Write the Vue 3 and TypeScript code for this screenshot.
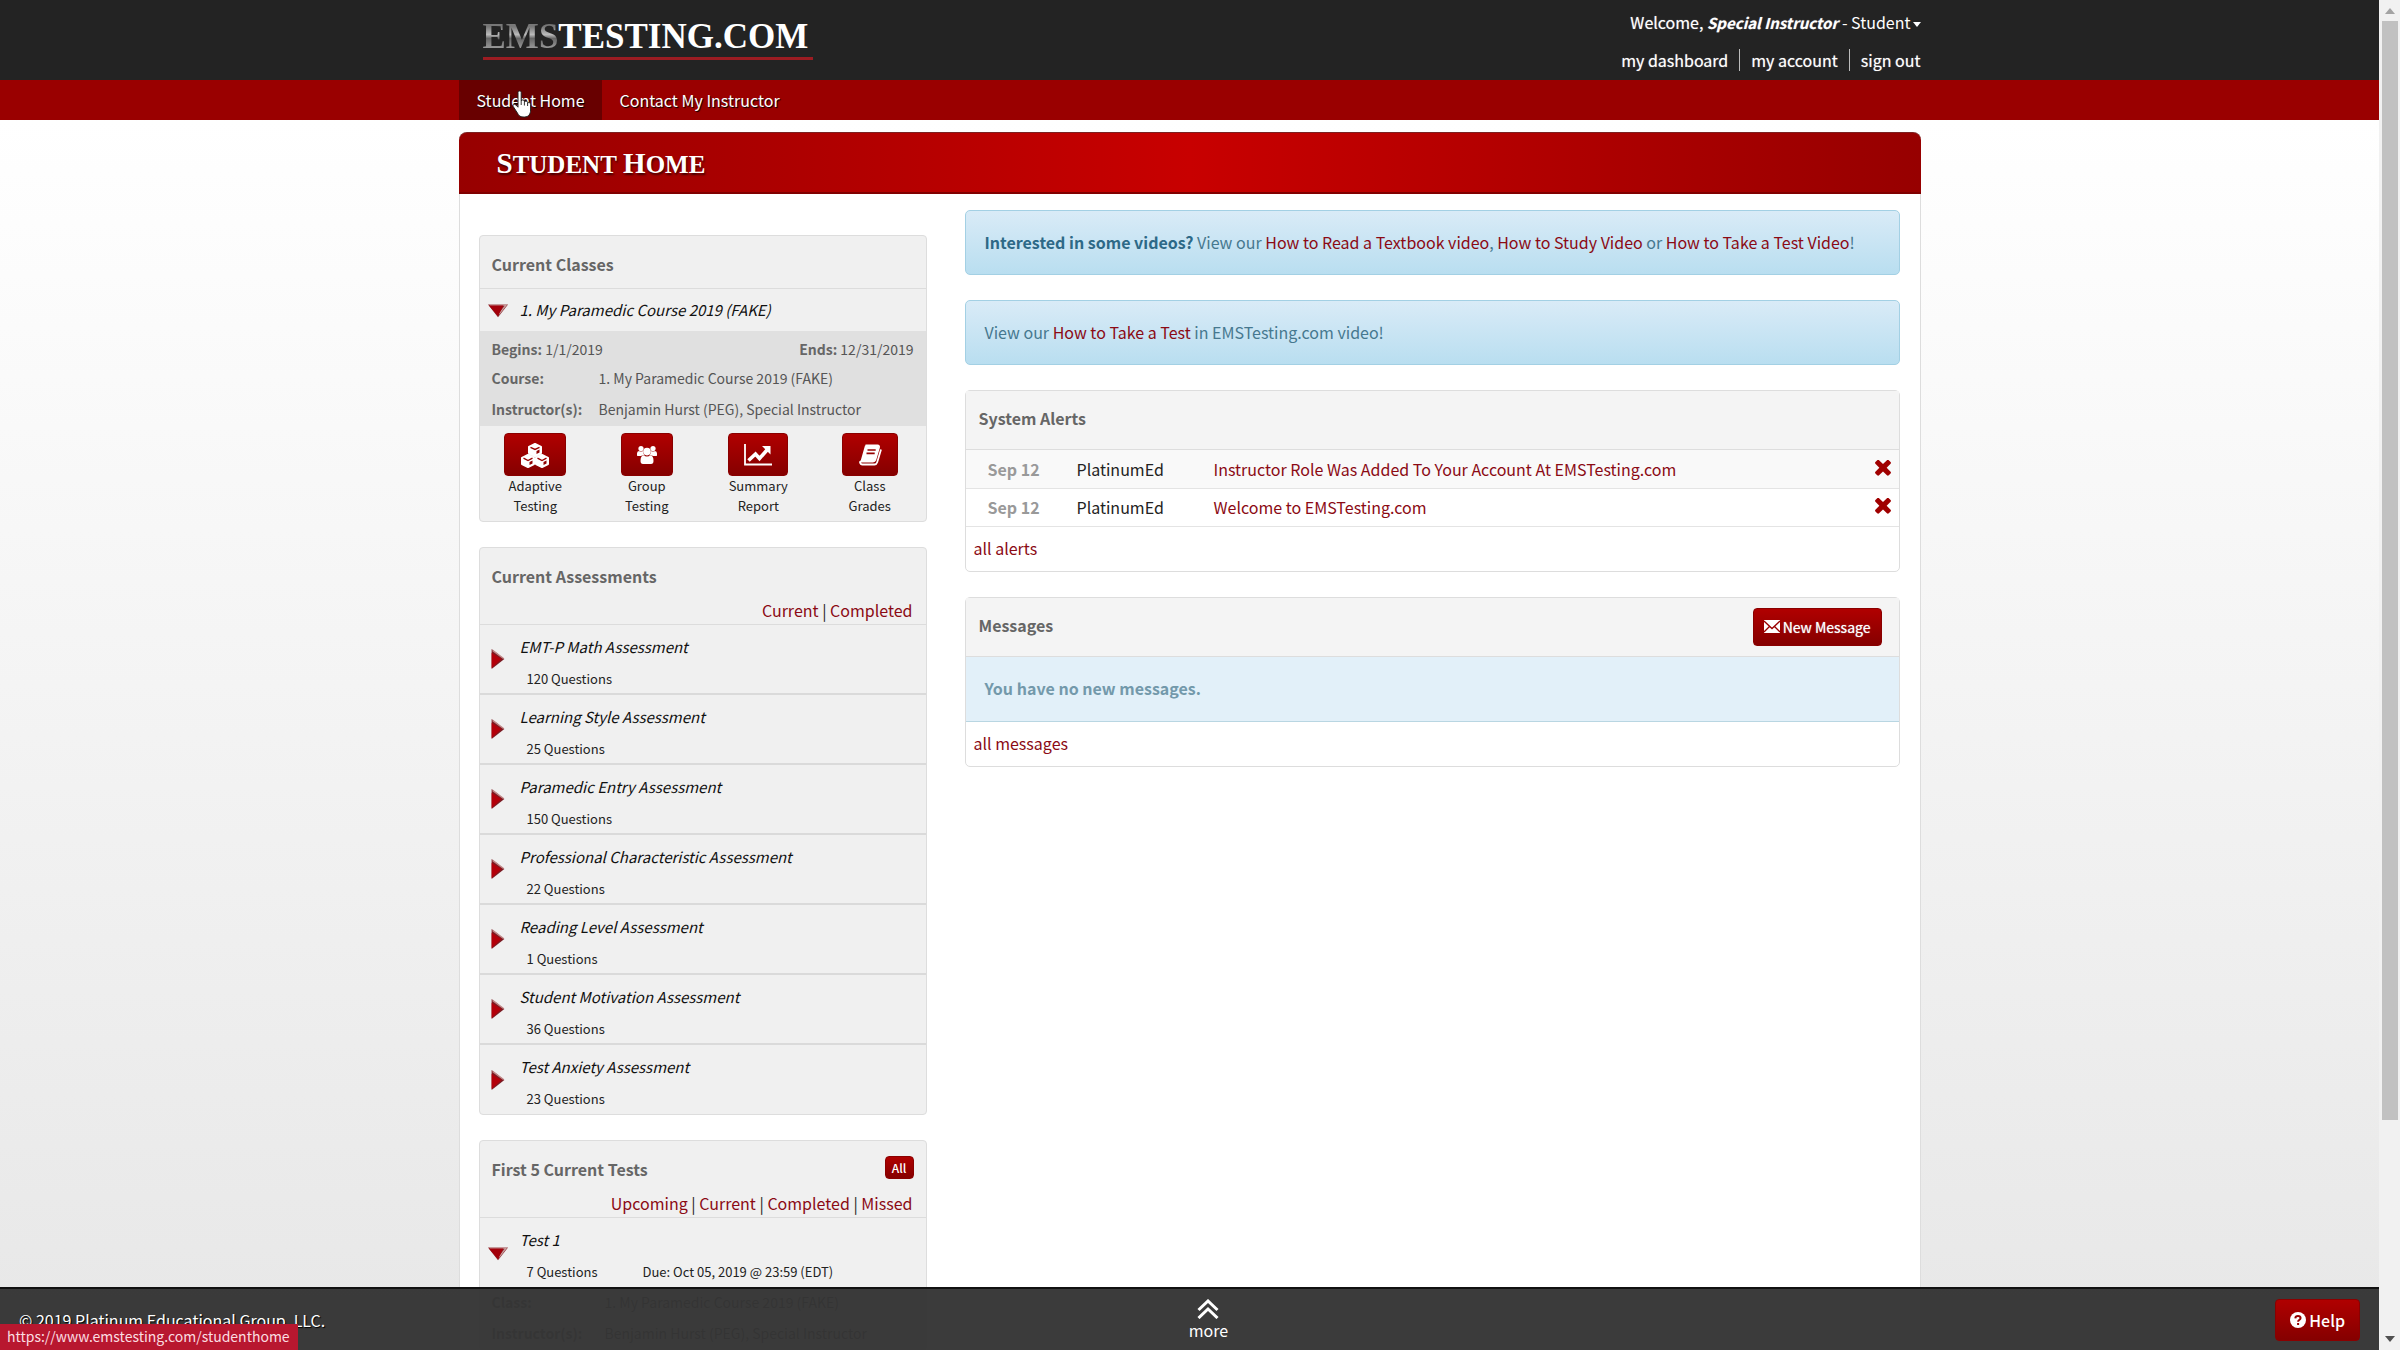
<script setup lang="ts">
interface Assessment {
  name: string
  questions: number
}
interface Alert {
  date: string
  from: string
  subject: string
}

const assessments: Assessment[] = [
  { name: 'EMT-P Math Assessment', questions: 120 },
  { name: 'Learning Style Assessment', questions: 25 },
  { name: 'Paramedic Entry Assessment', questions: 150 },
  { name: 'Professional Characteristic Assessment', questions: 22 },
  { name: 'Reading Level Assessment', questions: 1 },
  { name: 'Student Motivation Assessment', questions: 36 },
  { name: 'Test Anxiety Assessment', questions: 23 },
]

const alerts: Alert[] = [
  { date: 'Sep 12', from: 'PlatinumEd', subject: 'Instructor Role Was Added To Your Account At EMSTesting.com' },
  { date: 'Sep 12', from: 'PlatinumEd', subject: 'Welcome to EMSTesting.com' },
]

const testFilters: string[] = ['Upcoming', 'Current', 'Completed', 'Missed']
const assessmentFilters: string[] = ['Current', 'Completed']
</script>

<template>
  <div class="shell">
    <div class="window">
      <div class="page">
        <header class="top">
          <div class="container top-row">
            <a class="logo" href="#"><span class="logo-ems">EMS</span>TESTING.COM</a>
            <div class="user">
              <p class="welcome">
                Welcome, <strong><em>Special Instructor</em></strong>
                <button class="role" type="button">- Student<span class="caret"></span></button>
              </p>
              <ul class="user-links">
                <li><a href="#">my dashboard</a></li>
                <li><a href="#">my account</a></li>
                <li><a href="#">sign out</a></li>
              </ul>
            </div>
          </div>
        </header>

        <nav class="nav">
          <div class="container nav-row">
            <a class="active" href="#">Student Home
              <svg class="cursor" viewBox="0 0 22 28" width="22" height="28" aria-hidden="true">
                <path d="M6 2.500c0-2 3.200-2 3.200 0v8.500c.4-1.600 3-1.500 3.200.3v.7c.5-1.500 3-1.200 3.200.5v.8c.6-1.300 3-1 3 .9v5.800c0 4-2 7-6 7H11c-3 0-4.300-1.600-5.600-4L1.200 16.500c-1-2 1.200-3 2.600-1.600L6 17.200z" fill="#fff" stroke="#222" stroke-width="1" />
                <path d="M9.200 11v4M12.400 12v3.500M15.600 13v3" stroke="#333" stroke-width="1" fill="none" />
              </svg>
            </a>
            <a href="#">Contact My Instructor</a>
          </div>
        </nav>

        <main class="container board">
          <h1 class="board-title"><span>Student</span> <span>Home</span></h1>

          <div class="columns">
            <aside class="side">
              <section class="panel">
                <h2 class="panel-title">Current Classes</h2>
                <div class="class-name">
                  <svg class="arrow" viewBox="0 0 22 22" aria-hidden="true"><use href="#arrow-down" /></svg>
                  <em>1. My Paramedic Course 2019 (FAKE)</em>
                </div>
                <div class="details">
                  <p class="dates"><span><b>Begins:</b> 1/1/2019</span><span><b>Ends:</b> 12/31/2019</span></p>
                  <dl>
                    <dt>Course:</dt><dd>1. My Paramedic Course 2019 (FAKE)</dd>
                    <dt>Instructor(s):</dt><dd>Benjamin Hurst (PEG), Special Instructor</dd>
                  </dl>
                </div>
                <div class="actions">
                  <div class="action">
                    <button class="btn" type="button" aria-label="Adaptive Testing">
                      <svg viewBox="0 0 30 26" width="30" height="26">
                        <g fill="#fff" stroke="#fff" stroke-width="2" stroke-linejoin="round">
                          <path d="M15 2l6 3v6l-6 3-6-3V5zM8 13l6 3v6l-6 3-6-3v-6zM22 13l6 3v6l-6 3-6-3v-6z" />
                        </g>
                        <path d="M15 8v-.1M10.500 5.300L15 7.500l4.500-2.200M3.500 16.200L8 18.500l4.500-2.300M17.500 16.200l4.500 2.300 4.500-2.300" stroke="#990000" stroke-width="1.400" fill="none" />
                        <path d="M16.500 9l3-1.500v3l-3 1.600zM9.500 20l3-1.500v3l-3 1.500zM23.500 20l3-1.500v3l-3 1.500z" fill="#900000" />
                      </svg>
                    </button>
                    <span>Adaptive<br>Testing</span>
                  </div>
                  <div class="action">
                    <button class="btn" type="button" aria-label="Group Testing">
                      <svg viewBox="0 0 20 18" width="20" height="18" fill="#fff">
                        <circle cx="4" cy="2.600" r="2.600" /><circle cx="16" cy="2.600" r="2.600" />
                        <path d="M0 9.500V7.500Q0 5 2 5q2 1.200 4 0 0 3 2 4.500H5L4 10H2Q0 10 0 9.500zM20 9.500V7.500Q20 5 18 5q-2 1.200-4 0 0 3-2 4.500h3l1 .5h2q2 0 2-.5z" />
                        <circle cx="10" cy="5.600" r="3.800" />
                        <path d="M3.500 15q0-5.500 3-5.500 3.500 2 7 0 3 0 3 5.500 0 3-2.500 3H6q-2.500 0-2.500-3z" />
                      </svg>
                    </button>
                    <span>Group<br>Testing</span>
                  </div>
                  <div class="action">
                    <button class="btn" type="button" aria-label="Summary Report">
                      <svg viewBox="0 0 28 22" width="28" height="22">
                        <path d="M1 0v20.500h27" fill="none" stroke="#fff" stroke-width="1.800" />
                        <path d="M4.500 16.500l7-6.500 4 4.500 7.500-8.500" fill="none" stroke="#fff" stroke-width="3.600" />
                        <path d="M18 2h8.500v8.500z" fill="#fff" />
                      </svg>
                    </button>
                    <span>Summary<br>Report</span>
                  </div>
                  <div class="action">
                    <button class="btn" type="button" aria-label="Class Grades">
                      <svg viewBox="0 0 24 22" width="24" height="22">
                        <path d="M7.500 1.500h12q2 0 1.500 2l-3.700 12.500q-.5 1.500-2.300 1.500H4q-2.200 0-2 .8.500 2.200 2.500 2.200h12q2 0 2.700-2.200L23 5.500" fill="none" stroke="#fff" stroke-width="1.800" />
                        <path d="M7 1.500h12.500q2 0 1.300 2L17 16q-.4 1.300-2 1.300H2.500z" fill="#fff" />
                        <path d="M9.500 6h8.200M8.500 9.400h8.200" stroke="#960000" stroke-width="1.600" />
                      </svg>
                    </button>
                    <span>Class<br>Grades</span>
                  </div>
                </div>
              </section>

              <section class="panel">
                <h2 class="panel-title with-filters">Current Assessments</h2>
                <p class="filters">
                  <template v-for="(f, i) in assessmentFilters" :key="f"><template v-if="i"> | </template><a href="#">{{ f }}</a></template>
                </p>
                <ul class="items">
                  <li v-for="a in assessments" :key="a.name" class="item">
                    <svg class="arrow" viewBox="0 0 22 22" aria-hidden="true"><use href="#arrow-right" /></svg>
                    <div class="item-text">
                      <em>{{ a.name }}</em>
                      <p class="meta"><span>{{ a.questions }} Questions</span></p>
                    </div>
                  </li>
                </ul>
              </section>

              <section class="panel">
                <div class="title-row">
                  <h2 class="panel-title with-filters">First 5 Current Tests</h2>
                  <button class="btn btn-all" type="button">All</button>
                </div>
                <p class="filters">
                  <template v-for="(f, i) in testFilters" :key="f"><template v-if="i"> | </template><a href="#">{{ f }}</a></template>
                </p>
                <ul class="items">
                  <li class="item">
                    <svg class="arrow" viewBox="0 0 22 22" aria-hidden="true"><use href="#arrow-down" /></svg>
                    <div class="item-text">
                      <em>Test 1</em>
                      <p class="meta"><span>7 Questions</span><span>Due: Oct 05, 2019 @ 23:59 (EDT)</span></p>
                    </div>
                  </li>
                </ul>
                <div class="details tight">
                  <dl class="wide">
                    <dt>Class:</dt><dd>1. My Paramedic Course 2019 (FAKE)</dd>
                    <dt>Instructor(s):</dt><dd>Benjamin Hurst (PEG), Special Instructor</dd>
                  </dl>
                </div>
              </section>
            </aside>

            <div class="feed">
              <p class="notice">
                <strong>Interested in some videos?</strong> View our <a href="#">How to Read a Textbook video</a>, <a href="#">How to Study Video</a> or <a href="#">How to Take a Test Video</a>!
              </p>
              <p class="notice">View our <a href="#">How to Take a Test</a> in EMSTesting.com video!</p>

              <section class="box">
                <div class="box-head"><h2>System Alerts</h2></div>
                <table class="alerts">
                  <tbody>
                    <tr v-for="a in alerts" :key="a.subject">
                      <th scope="row">{{ a.date }}</th>
                      <td class="from">{{ a.from }}</td>
                      <td><a href="#">{{ a.subject }}</a></td>
                      <td class="remove">
                        <button type="button" aria-label="Remove alert">
                          <svg viewBox="300 384 1192 1192" width="16" height="16">
                            <path fill="#a00000" d="M1490 1322q0 40-28 68l-136 136q-28 28-68 28t-68-28l-294-294-294 294q-28 28-68 28t-68-28l-136-136q-28-28-28-68t28-68l294-294-294-294q-28-28-28-68t28-68l136-136q28-28 68-28t68 28l294 294 294-294q28-28 68-28t68 28l136 136q28 28 28 68t-28 68l-294 294 294 294q28 28 28 68z" />
                          </svg>
                        </button>
                      </td>
                    </tr>
                  </tbody>
                </table>
                <p class="all"><a href="#">all alerts</a></p>
              </section>

              <section class="box">
                <div class="box-head">
                  <h2>Messages</h2>
                  <button class="btn btn-new" type="button">
                    <svg viewBox="0 0 16 13" width="16" height="13">
                      <rect width="16" height="13" fill="#fff" />
                      <path d="M0 1l8 7.500L16 1M0 12l5.500-5.500M16 12l-5.500-5.500" stroke="#990000" stroke-width="1.300" fill="none" />
                    </svg>
                    New Message
                  </button>
                </div>
                <p class="empty">You have no new messages.</p>
                <p class="all"><a href="#">all messages</a></p>
              </section>
            </div>
          </div>
        </main>
      </div>

      <footer class="footer">
        <p>© 2019 Platinum Educational Group, LLC.</p>
        <button class="more" type="button">
          <svg viewBox="0 0 22 20" width="22" height="20" fill="none" stroke="#fff" stroke-width="3">
            <path d="M1.500 11L11 2l9.500 9M1.500 19L11 10l9.500 9" />
          </svg>
          more
        </button>
        <button class="btn btn-help" type="button">
          <svg viewBox="0 0 16 16" width="16" height="16">
            <circle cx="8" cy="8" r="8" fill="#fff" />
            <path d="M5.300 6.300Q5.500 3.900 8 3.900t2.600 2.200q0 1.100-1.300 1.800Q8.100 8.500 8.100 9.800M8.100 11v2" stroke="#960000" stroke-width="2" fill="none" />
          </svg>
          Help
        </button>
      </footer>
      <div class="status">https://www.emstesting.com/studenthome</div>
    </div>

    <div class="scrollbar" aria-hidden="true">
      <svg viewBox="0 0 10 6" width="10" height="6"><path d="M0 6l5-6 5 6z" fill="#a3a3a3" /></svg>
      <div class="track"><div class="thumb"></div></div>
      <svg viewBox="0 0 10 6" width="10" height="6"><path d="M0 0l5 6 5-6z" fill="#505050" /></svg>
    </div>

    <svg width="0" height="0" class="defs" aria-hidden="true">
      <defs>
        <symbol id="arrow-down" viewBox="0 0 22 22">
          <path d="M0 5h22L11 19z" fill="#8c2a30" /><path d="M2 5.500h18l-8 10" stroke="#c9a0a0" stroke-width="1.500" fill="none" />
          <path d="M1 6h16l-6 12z" fill="#a3000a" />
        </symbol>
        <symbol id="arrow-right" viewBox="0 0 22 22">
          <path d="M4 0l14 11L4 22z" fill="#7c1c24" /><path d="M5 1.500l12 9" stroke="#c48a8a" stroke-width="1.500" fill="none" />
          <path d="M4 4l11 7L4 21z" fill="#b3000a" />
        </symbol>
      </defs>
    </svg>
  </div>
</template>

<style>
body {
  margin: 0;
}
</style>

<style scoped>
.shell {
  display: flex;
  height: 100vh;
  overflow: hidden;
  font-family: "Noto Sans CJK SC", "Open Sans", sans-serif;
  font-size: 16px;
  line-height: 22px;
  color: #222;
}
.shell * {
  box-sizing: border-box;
}
.defs {
  position: absolute;
}
p, h1, h2, ul, dl, dd {
  margin: 0;
  padding: 0;
}
ul {
  list-style: none;
}
a {
  color: #8b0a14;
  text-decoration: none;
}
button {
  font: inherit;
  color: inherit;
  border: 0;
  padding: 0;
  background: none;
  cursor: pointer;
}
.window {
  position: relative;
  flex: 1;
  min-width: 0;
}
.page {
  height: 100%;
  overflow-y: auto;
  scrollbar-width: none;
  background: linear-gradient(#fff 120px, #e7e7e7);
}
.container {
  width: 100%;
  max-width: 1462px;
  margin: 0 auto;
}

.top {
  background: #232323;
  color: #fff;
}
.top-row {
  display: flex;
  justify-content: space-between;
  height: 80px;
}
.logo {
  align-self: flex-start;
  margin: 16px 0 0 24px;
  padding-right: 5px;
  border-bottom: 3px solid #9c1c22;
  font: bold 35px/41px "Liberation Serif", serif;
  color: #fff;
}
.logo-ems {
  background: linear-gradient(#777 25%, #bbb 45%, #666 55%, #999 80%);
  background-clip: text;
  color: transparent;
}
.user {
  padding-top: 11px;
  text-align: right;
  text-shadow: 0 0 1px #999;
}
.role {
  margin-left: 4px;
}
.caret {
  display: inline-block;
  margin-left: 2px;
  vertical-align: 2px;
  border: 4px solid transparent;
  border-top: 5px solid #fff;
  border-bottom: 0;
}
.user-links {
  display: flex;
  justify-content: flex-end;
  margin-top: 15px;
}
.user-links li + li {
  margin-left: 11px;
  padding-left: 11px;
  border-left: 1px solid #bbb;
}
.user-links a,
.nav a {
  color: #fff;
}

.nav {
  background: #9a0000;
}
.nav-row {
  display: flex;
}
.nav a {
  position: relative;
  padding: 9px 17px 9px 18px;
  text-shadow: 1px 1px 1px #000;
}
.nav .active {
  background: #680000;
}
.cursor {
  position: absolute;
  left: 53px;
  top: 10px;
}

.board {
  margin-top: 12px;
  background: #fff;
  border: 1px solid #ddd;
  border-top: 0;
  border-radius: 8px 8px 0 0;
}
.board-title {
  margin: 0 -1px;
  padding: 3px 38px 0;
  border-top: 1px solid #7c2020;
  border-bottom: 2px solid #800000;
  border-radius: 8px 8px 0 0;
  background: linear-gradient(90deg, #970000, #c80000 50%, #970000);
  font: bold 25px/54px "Liberation Serif", serif;
  text-transform: uppercase;
  text-shadow: 1px 2px 2px #400;
  color: #fff;
}
.board-title span {
  display: inline-block;
}
.board-title span::first-letter {
  font-size: 29px;
}
.columns {
  display: grid;
  grid-template-columns: 448fr 935fr;
  gap: 38px;
  align-items: start;
  padding: 0 20px 80px 19px;
}

.side {
  display: grid;
  gap: 25px;
  padding-top: 41px;
}
.panel {
  border: 1px solid #ddd;
  border-radius: 4px;
  background: #f0f0f0;
}
.panel-title {
  padding: 17px 12px 13px;
  border-bottom: 1px solid #dcdcdc;
  font-size: 16px;
  color: #666;
}
.panel-title.with-filters {
  padding-bottom: 12px;
  border-bottom: 0;
}
.title-row {
  display: flex;
  justify-content: space-between;
  align-items: flex-start;
  padding-right: 12px;
}
.filters {
  padding: 0 13px 3px;
  border-bottom: 1px solid #dcdcdc;
  text-align: right;
}
.class-name {
  display: flex;
  align-items: center;
  gap: 12px;
  height: 42px;
  padding: 0 8px;
}
.arrow {
  width: 20px;
  height: 20px;
  flex: none;
}
em {
  color: #111;
}
.class-name em,
.item em {
  font-size: 15px;
}
.welcome em {
  font-size: 15px;
  color: #fff;
}
.details {
  padding: 4px 12px 1px;
  background: #e0e0e0;
  font-size: 14px;
  color: #555;
}
.details.tight {
  padding-top: 0;
}
.details b,
dt {
  font-weight: bold;
  color: #666;
}
.dates {
  display: flex;
  justify-content: space-between;
  line-height: 28px;
}
dl {
  display: grid;
  grid-template-columns: 107px 1fr;
  line-height: 31px;
}
dl.wide {
  grid-template-columns: 113px 1fr;
}
.actions {
  display: grid;
  grid-template-columns: repeat(4, 1fr);
  padding: 7px 0 5px;
}
.action {
  display: flex;
  flex-direction: column;
  align-items: center;
  text-align: center;
  font-size: 13px;
  line-height: 20px;
}
.btn {
  display: inline-flex;
  align-items: center;
  justify-content: center;
  border: 1px solid #8a0000;
  border-radius: 4px;
  background: linear-gradient(#b00000, #850000);
  color: #fff;
}
.action .btn {
  height: 43px;
  padding: 0 15px;
}
.btn-all {
  margin-top: 15px;
  width: 29px;
  height: 23px;
  font-size: 12px;
  font-weight: 500;
}
.item {
  display: flex;
  align-items: center;
  gap: 12px;
  height: 70px;
  padding: 0 8px;
  border-bottom: 2px solid #dadada;
}
.item:last-child {
  height: 69px;
  border-bottom: 0;
}
.item-text {
  padding-top: 6px;
}
.item em {
  display: block;
}
.meta {
  display: flex;
  padding: 11px 0 0 7px;
  font-size: 13px;
  line-height: 20px;
}
.meta span:first-child {
  flex: 0 0 116px;
}

.feed {
  padding-top: 16px;
}
.notice {
  margin-bottom: 25px;
  padding: 20px 19px 21px;
  border: 1px solid #a3d0e4;
  border-radius: 5px;
  background: linear-gradient(#d9ebf7, #b9def0);
  color: #46788f;
}
.notice strong {
  color: #2d6987;
}
.box {
  margin-bottom: 25px;
  border: 1px solid #ddd;
  border-radius: 5px;
  background: #fff;
}
.box-head {
  display: flex;
  justify-content: space-between;
  align-items: center;
  height: 59px;
  padding: 0 17px 0 13px;
  border-bottom: 1px solid #ddd;
  background: #f4f4f4;
}
h2 {
  font-size: 16px;
  color: #666;
}
.box-head h2 {
  padding-bottom: 4px;
}
.alerts {
  width: 100%;
  border-collapse: collapse;
}
.alerts tr {
  height: 38px;
  border-bottom: 1px solid #e4e4e4;
}
.alerts tr:first-child {
  background: #f9f9f9;
}
.alerts th,
.alerts td {
  padding: 0;
  text-align: left;
}
.alerts th {
  width: 111px;
  padding-left: 22px;
  color: #999;
}
.alerts .from {
  width: 137px;
}
.alerts .remove {
  width: 24px;
}
.remove button {
  display: block;
}
.all {
  padding: 10px 8px 12px;
}
.empty {
  padding: 20px 19px 22px;
  border-bottom: 1px solid #b9d6e2;
  background: #e2f0f9;
  font-weight: bold;
  color: #7399ab;
}
.btn-new {
  height: 38px;
  padding: 0 10px;
  gap: 3px;
  font-size: 14px;
  text-shadow: 0 0 1px #ccc;
}

.footer {
  position: absolute;
  left: 0;
  right: 0;
  bottom: 0;
  display: grid;
  grid-template-columns: 1fr auto 1fr;
  align-items: center;
  height: 63px;
  padding: 0 19px;
  border-top: 2px solid #111;
  background: rgba(51, 51, 51, 0.96);
  color: #fff;
  text-shadow: 1px 1px 1px #000;
}
.more {
  display: flex;
  flex-direction: column;
  align-items: center;
  margin-left: 38px;
}
.btn-help {
  justify-self: end;
  height: 42px;
  padding: 0 14px;
  gap: 3px;
  font-weight: 500;
}
.status {
  position: absolute;
  left: 0;
  bottom: 0;
  padding: 1px 8px 3px 7px;
  background: #b8172f;
  font-size: 14px;
  color: #fbdde1;
}

.scrollbar {
  display: flex;
  flex-direction: column;
  align-items: center;
  width: 21px;
  padding: 8px 0;
  background: #f1f1f1;
}
.track {
  flex: 1;
  margin: 7px 0;
}
.thumb {
  width: 16px;
  height: 84%;
  background: #c1c1c1;
}
</style>
